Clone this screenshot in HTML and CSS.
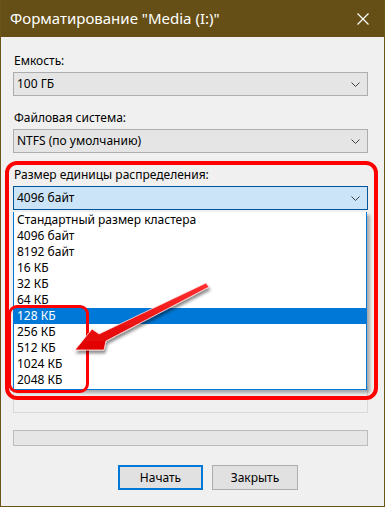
FILE: index.html
```html
<!DOCTYPE html>
<html lang="ru">
<head>
<meta charset="utf-8">
<title>Форматирование</title>
<link rel="stylesheet" href="styles.css">
</head>
<body>
<div class="window">
  <div class="titlebar">
    <span class="title">Форматирование "Media (I:)"</span>
    <svg class="close" width="12" height="12" viewBox="0 0 12 12"><path d="M0.5 0.5 L11.5 11.5 M11.5 0.5 L0.5 11.5" stroke="#fff" stroke-width="1.2" fill="none"/></svg>
  </div>
  <div class="content">
    <div class="label first">Емкость:</div>
    <div class="combo"><span>100 ГБ</span><svg class="chev" width="9" height="5" viewBox="0 0 9 5"><path d="M0.5 0.5 L4.5 4.5 L8.5 0.5" stroke="#404040" fill="none"/></svg></div>
    <div class="label">Файловая система:</div>
    <div class="combo"><span>NTFS (по умолчанию)</span><svg class="chev" width="9" height="5" viewBox="0 0 9 5"><path d="M0.5 0.5 L4.5 4.5 L8.5 0.5" stroke="#404040" fill="none"/></svg></div>
    <div class="label">Размер единицы распределения:</div>
    <div class="combo focused"><span>4096 байт</span><svg class="chev" width="9" height="5" viewBox="0 0 9 5"><path d="M0.5 0.5 L4.5 4.5 L8.5 0.5" stroke="#404040" fill="none"/></svg></div>
    <div class="textbox"></div>
    <div class="progress"></div>
    <div class="buttons">
      <div class="btn default">Начать</div>
      <div class="btn">Закрыть</div>
    </div>

    <ul class="dropdown">
      <li>Стандартный размер кластера</li>
      <li>4096 байт</li>
      <li>8192 байт</li>
      <li>16 КБ</li>
      <li>32 КБ</li>
      <li>64 КБ</li>
      <li class="sel">128 КБ</li>
      <li>256 КБ</li>
      <li>512 КБ</li>
      <li>1024 КБ</li>
      <li>2048 КБ</li>
    </ul>
  </div>

  <div class="mark big"></div>
  <div class="mark small"></div>
  <svg class="arrow" width="385" height="507" viewBox="0 0 385 507">
    <defs>
      <linearGradient id="ag" x1="0" y1="0" x2="0" y2="1">
        <stop offset="0" stop-color="#ff3030"/>
        <stop offset="1" stop-color="#e00000"/>
      </linearGradient>
      <filter id="sh" x="-20%" y="-20%" width="140%" height="160%">
        <feDropShadow dx="1" dy="3" stdDeviation="1.6" flood-color="#000" flood-opacity="0.45"/>
      </filter>
    </defs>
    <polygon points="75,350 92,329 99,334 206,283 209,287 106,341 104,350" fill="url(#ag)" stroke="#ffe0e0" stroke-width="0.8" stroke-linejoin="round" filter="url(#sh)"/>
  </svg>
</div>
</body>
</html>
```
FILE: styles.css
```css
* { box-sizing: border-box; }
html, body { margin: 0; padding: 0; background: #f0f0f0; }
body { font-family: "Noto Sans", "Open Sans", sans-serif; font-size: 12px; color: #000; }

.window {
  position: relative;
  width: 385px;
  height: 507px;
  background: #f0f0f0;
  border: 1px solid #6a5418;
  border-top: none;
  overflow: hidden;
}

.titlebar {
  height: 37px;
  background: #654f16;
  color: #fff;
  display: flex;
  align-items: center;
  justify-content: space-between;
  padding: 0 15px 1px 9px;
}
.title { font-size: 15px; letter-spacing: 0; }
.close { display: block; margin-top: 1px; }

.content {
  position: relative;
  padding: 16px 16px 0 12px;
}

.label { height: 15px; line-height: 15px; margin-top: 14px; margin-left: 1px; }
.label.first { margin-top: 0; }

.combo {
  margin-top: 4px;
  height: 24px;
  border: 1px solid #adadad;
  background: #e5e5e5;
  display: flex;
  align-items: center;
  justify-content: space-between;
  padding: 0 7px 0 3px;
}
.combo span { line-height: 20px; }
.combo.focused { background: #cce4f7; border-color: #005499; }
.chev { display: block; }

.textbox {
  margin-top: 176px;
  height: 27px;
  border: 1px solid #d9d9d9;
  background: #f0f0f0;
}

.progress {
  margin-top: 17px;
  height: 16px;
  border: 1px solid #bcbcbc;
  background: #e6e6e6;
}

.buttons {
  display: flex;
  gap: 9px;
  margin-top: 19px;
  padding-left: 105px;
}
.btn {
  width: 86px;
  height: 25px;
  border: 1px solid #adadad;
  background: #e1e1e1;
  display: flex;
  align-items: center;
  justify-content: center;
  padding-bottom: 1px;
}
.btn.default { width: 85px; border: 2px solid #0078d7; }

.dropdown {
  position: absolute;
  left: 12px;
  top: 175px;
  width: 354px;
  height: 178px;
  margin: 0;
  padding: 0;
  list-style: none;
  background: #fff;
  border: 1px solid #0078d7;
  border-top: none;
  box-shadow: 3px 3px 3px rgba(0,0,0,0.3);
}
.dropdown li {
  height: 16px;
  line-height: 16px;
  padding-left: 3px;
  white-space: nowrap;
}
.dropdown li.sel { background: #0078d7; color: #fff; }

.mark {
  position: absolute;
  border: solid #ff0000;
  pointer-events: none;
}
.mark.big { left: 4px; top: 161px; width: 373px; height: 239px; border-width: 4px; border-radius: 12px; }
.mark.small { left: 7px; top: 305px; width: 81px; height: 88px; border-width: 3px; border-radius: 9px; }

.arrow { position: absolute; left: -1px; top: 0; pointer-events: none; }
```
